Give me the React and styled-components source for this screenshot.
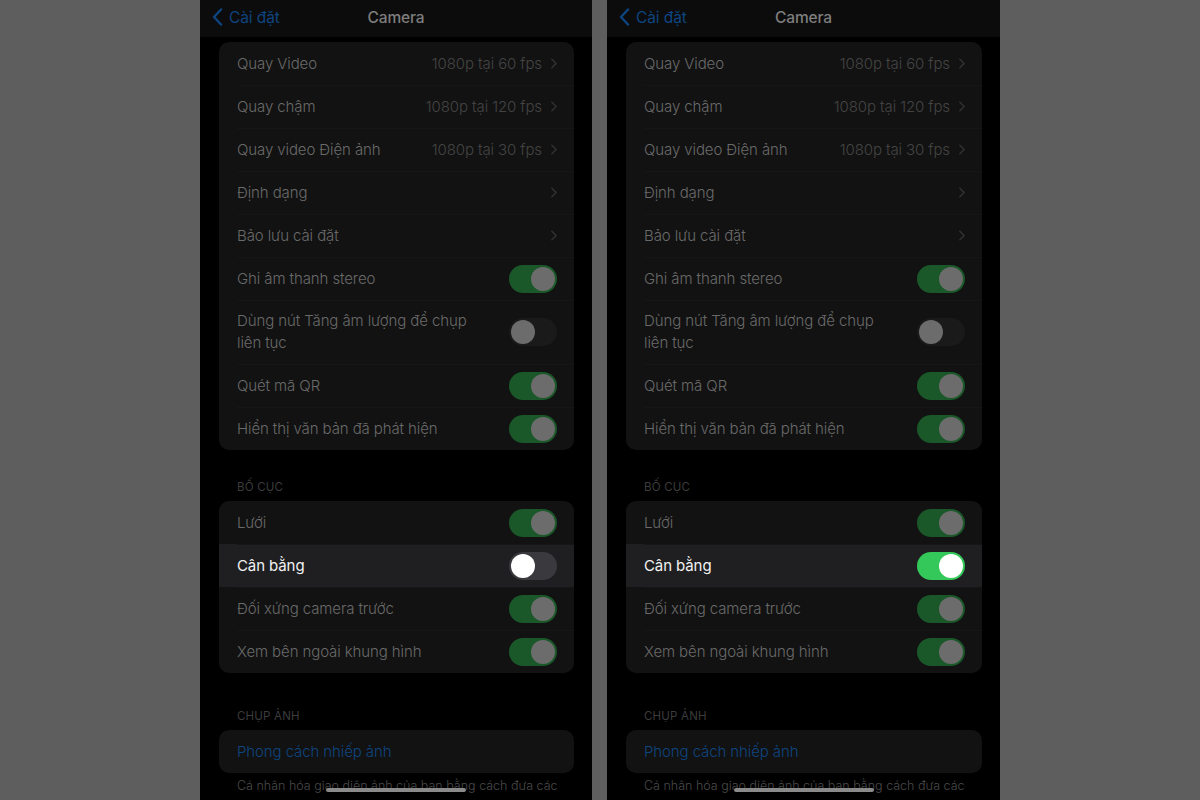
import React from "react";
import styled, { createGlobalStyle } from "styled-components";

const Global = createGlobalStyle`
  html, body { margin: 0; padding: 0; }
  body {
    background: #5e5e5e;
    font-family: Inter, "Noto Sans", "Liberation Sans", sans-serif;
    -webkit-font-smoothing: antialiased;
  }
`;

const Stage = styled.div`
  display: flex;
  justify-content: center;
  gap: 15px;
  width: 1200px;
  height: 800px;
  overflow: hidden;
`;

const Phone = styled.div`
  position: relative;
  width: ${(p) => p.$w}px;
  height: 800px;
  background: #000;
  overflow: hidden;
  display: flex;
  flex-direction: column;
`;

const NavBar = styled.div`
  height: 37px;
  flex: none;
  background: #0c0c0c;
  display: grid;
  grid-template-columns: 1fr auto 1fr;
  align-items: center;
  padding: 0 12px 3px 12px;
  box-sizing: border-box;
`;

const Back = styled.div`
  display: flex;
  align-items: center;
  gap: 6px;
  color: #0e4580;
  font-size: 15.5px;
  letter-spacing: -0.1px;
`;

const Title = styled.div`
  color: #7e7e7e;
  font-size: 15.5px;
  font-weight: 500;
  letter-spacing: -0.1px;
`;

const Content = styled.div`
  padding: 5px 18px 0 19px;
  display: flex;
  flex-direction: column;
`;

const Group = styled.div`
  background: #121212;
  border-radius: 10px;
  overflow: hidden;
  display: flex;
  flex-direction: column;
`;

const Row = styled.div`
  position: relative;
  display: flex;
  align-items: center;
  justify-content: space-between;
  min-height: ${(p) => (p.$tall ? 64 : 43)}px;
  padding: 0 17px 0 18px;
  box-sizing: border-box;
  background: ${(p) => (p.$hl ? "#1f1f21" : "transparent")};
  z-index: ${(p) => (p.$hl ? 1 : 0)};
  &:not(:first-child)::before {
    content: "";
    position: absolute;
    top: 0;
    left: 18px;
    right: 0;
    height: 1px;
    background: #161616;
  }
`;

const Label = styled.div`
  color: ${(p) => (p.$hl ? "#f2f2f2" : p.$blue ? "#0e4580" : "#6a6a6a")};
  font-size: 15px;
  font-weight: ${(p) => (p.$hl ? 400 : 350)};
  line-height: 22px;
  letter-spacing: -0.1px;
  max-width: 255px;
`;

const Right = styled.div`
  display: flex;
  align-items: center;
  gap: 9px;
`;

const Value = styled.span`
  color: #444444;
  font-size: 15px;
  font-weight: 350;
  letter-spacing: -0.1px;
`;

const Track = styled.div`
  position: relative;
  width: 48px;
  height: 28px;
  border-radius: 14px;
  flex: none;
  background: ${(p) =>
    p.$on ? (p.$hl ? "#34c759" : "#1a5829") : p.$hl ? "#3a3a3e" : "#1a1a1a"};
`;

const Knob = styled.div`
  position: absolute;
  top: 2px;
  left: ${(p) => (p.$on ? 22 : 2)}px;
  width: 24px;
  height: 24px;
  border-radius: 50%;
  background: ${(p) => (p.$hl ? "#ffffff" : "#6c6c6c")};
`;

const SectionHeader = styled.div`
  color: #3c3c3c;
  font-size: 11.5px;
  line-height: 14px;
  letter-spacing: 0.2px;
  text-transform: uppercase;
  padding: ${(p) => p.$top}px 18px 7px 18px;
`;

const Footer = styled.div`
  color: #4a4a4a;
  font-size: 12.5px;
  font-weight: 350;
  line-height: 16px;
  padding: 5px 18px 0 18px;
  white-space: nowrap;
`;

const HomeBar = styled.div`
  position: absolute;
  left: 50%;
  bottom: 8px;
  width: 140px;
  height: 4px;
  margin-left: -70px;
  border-radius: 2px;
  background: #8a8a8a;
`;

const Chevron = ({ color = "#333333" }) => (
  <svg width="6" height="11" viewBox="0 0 7 12" fill="none">
    <path d="M1 1l5 5-5 5" stroke={color} strokeWidth="1.6" strokeLinecap="round" strokeLinejoin="round" />
  </svg>
);

const BackChevron = () => (
  <svg width="11" height="18" viewBox="0 0 11 18" fill="none">
    <path d="M9 1.5L2 9l7 7.5" stroke="#0e4580" strokeWidth="2.4" strokeLinecap="round" strokeLinejoin="round" />
  </svg>
);

const Toggle = ({ on, hl }) => (
  <Track $on={on} $hl={hl}>
    <Knob $on={on} $hl={hl} />
  </Track>
);

const group1 = [
  { label: "Quay Video", value: "1080p tại 60 fps" },
  { label: "Quay chậm", value: "1080p tại 120 fps" },
  { label: "Quay video Điện ảnh", value: "1080p tại 30 fps" },
  { label: "Định dạng", value: "" },
  { label: "Bảo lưu cài đặt", value: "" },
  { label: "Ghi âm thanh stereo", toggle: true, on: true },
  { label: "Dùng nút Tăng âm lượng để chụp liên tục", toggle: true, on: false, tall: true },
  { label: "Quét mã QR", toggle: true, on: true },
  { label: "Hiển thị văn bản đã phát hiện", toggle: true, on: true },
];

const SettingRow = ({ item, hl }) => (
  <Row $tall={item.tall} $hl={hl}>
    <Label $hl={hl}>{item.label}</Label>
    <Right>
      {item.toggle ? (
        <Toggle on={item.on} hl={hl} />
      ) : (
        <>
          {item.value && <Value>{item.value}</Value>}
          <Chevron />
        </>
      )}
    </Right>
  </Row>
);

const Screen = ({ w, balanceOn }) => {
  const group2 = [
    { label: "Lưới", toggle: true, on: true },
    { label: "Cân bằng", toggle: true, on: balanceOn, hl: true },
    { label: "Đối xứng camera trước", toggle: true, on: true },
    { label: "Xem bên ngoài khung hình", toggle: true, on: true },
  ];
  return (
    <Phone $w={w}>
      <NavBar>
        <Back>
          <BackChevron />
          <span>Cài đặt</span>
        </Back>
        <Title>Camera</Title>
        <div />
      </NavBar>
      <Content>
        <Group>
          {group1.map((it) => (
            <SettingRow key={it.label} item={it} />
          ))}
        </Group>
        <SectionHeader $top={30}>Bố cục</SectionHeader>
        <Group>
          {group2.map((it) => (
            <SettingRow key={it.label} item={it} hl={it.hl} />
          ))}
        </Group>
        <SectionHeader $top={36}>Chụp ảnh</SectionHeader>
        <Group>
          <Row>
            <Label $blue>Phong cách nhiếp ảnh</Label>
          </Row>
        </Group>
        <Footer>Cá nhân hóa giao diện ảnh của bạn bằng cách đưa các</Footer>
      </Content>
      <HomeBar />
    </Phone>
  );
};

export default function App() {
  return (
    <>
      <Global />
      <Stage>
        <Screen w={392} balanceOn={false} />
        <Screen w={393} balanceOn={true} />
      </Stage>
    </>
  );
}
